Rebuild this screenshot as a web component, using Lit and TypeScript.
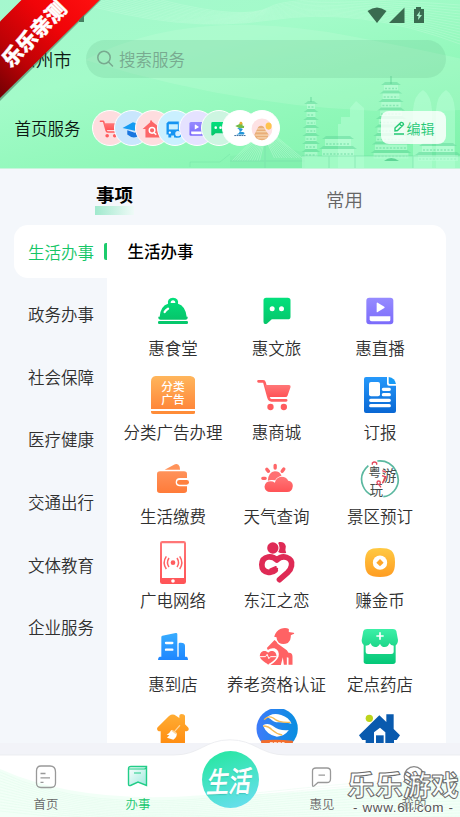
import { LitElement, html, css, svg, SVGTemplateResult } from "lit";
import { customElement } from "lit/decorators.js";
import { classMap } from "lit/directives/class-map.js";

interface Icon { box: string; art: SVGTemplateResult; }
interface Service extends Icon { name: string; }

const bell = svg`<path fill="url(#gGreen)" d="M158 119Q150 119 151 110H155Q158 77 180 71Q177 54 195 53Q213 54 210 71Q232 77 236 110H239Q240 119 232 119ZM188 69H202Q202 61 195 61Q188 61 188 69Z"/><rect x="150" y="123" width="90" height="9" rx="4" fill="#05c86c"/><path d="M170 96Q173 90 180 86" stroke="#fff" stroke-width="7" stroke-linecap="round" fill="none"/>`;
const chat = svg`<path fill="url(#gGreen)" d="M107 389H172Q180 389 180 397V446Q180 454 172 454H124L109 467Q99 471 99 461V397Q99 389 107 389Z"/><circle cx="125" cy="422" r="7.5" fill="#fff"/><circle cx="153" cy="422" r="7.5" fill="#fff"/>`;
const live = svg`<rect x="409" y="389" width="81" height="80" rx="9" fill="url(#gPurple)"/><path d="M440 406V431Q440 434 443 432L463 420Q465 418 463 416L443 404Q440 403 440 406Z" fill="#fff"/><path d="M419 445H481V456Q481 460 477 460H425Q419 460 419 454Z" fill="#fff"/>`;
const cart = svg`<path d="M450 304H464Q467 304 468 308L480 352Q482 361 489 361H533" fill="none" stroke="#ff6062" stroke-width="8" stroke-linecap="round" stroke-linejoin="round"/><path d="M469 315H542Q548 316 546 322L537 347Q536 351 531 351H481Z" fill="url(#gRed)"/><circle cx="486" cy="381" r="9.5" fill="#ff5b5e"/><circle cx="526" cy="381" r="9.5" fill="#ff5b5e"/>`;

const services: Service[] = [
  { name: "惠食堂", box: "129 27 132 132", art: bell },
  { name: "惠文旅", box: "73.5 363 132 132", art: chat },
  { name: "惠直播", box: "384 363 132 132", art: live },
  { name: "分类广告办理", box: "129 279 132 132", art: svg`<path d="M143 288H247Q262 290 262 304V387H129V304Q129 290 143 288Z" fill="url(#gOrange)"/><path d="M129 393H262V396Q262 402 256 402H135Q129 402 129 396Z" fill="#ff8c38"/><text x="195" y="333" class="ad">分类</text><text x="195" y="373" class="ad">广告</text>` },
  { name: "惠商城", box: "439.5 279 132 132", art: cart },
  { name: "订报", box: "234 39 132 132", art: svg`<path d="M258 51H321V71Q321 77 327 77H348V153Q348 159 342 159H258Q252 159 252 153V57Q252 51 258 51Z" fill="url(#gBlue)"/><path d="M326 51Q345 54 348 72H330Q326 72 326 68Z" fill="#189bf6"/><rect x="267" y="66" width="33" height="43" rx="6" fill="#fff"/><path d="M310 88H328M310 104H328M272 121H328M272 137H328" stroke="#fff" stroke-width="9.500" stroke-linecap="round"/>` },
  { name: "生活缴费", box: "129 21 132 132", art: svg`<path d="M170 59L201 43Q211 39 215 50L216 59Z" fill="#ff935a"/><path d="M156 64H228Q237 64 237 72V84H216Q203 84 203 97Q203 109 216 109H237V121Q237 129 228 129H156Q147 129 147 121V72Q147 64 156 64Z" fill="url(#gOrange2)"/><rect x="207" y="90" width="36" height="14" rx="7" fill="#ff813f"/>` },
  { name: "天气查询", box: "439.5 21 132 132", art: svg`<path d="M500 46V54M475 58L480 64M526 57L521 64M463 85H470" stroke="#ff6668" stroke-width="10" stroke-linecap="round"/><path d="M478 92Q480 66 499 64Q514 64 519 77Q505 80 500 91Q488 88 478 92Z" fill="#ff7072"/><path d="M486 126Q469 125 468 110Q470 94 487 94Q494 94 499 98Q503 81 519 80Q534 80 539 92Q553 94 553 108Q551 126 536 126Z" fill="url(#gRed)"/>` },
  { name: "景区预订", box: "234 291 132 132", art: svg`<path d="M265 317Q235 344 249 378Q257 397 274 405M292 303Q328 299 347 331Q365 365 342 393Q328 409 310 410" fill="none" stroke="#5bb8a0" stroke-width="5"/><text x="284" y="350" class="tour" font-size="37">粤</text><text x="327" y="363" class="tour" font-size="44">游</text><text x="289" y="406" class="tour" font-size="40">玩</text><path d="M277 314V309Q283 303 290 309V314M307 332L318 337M306 347L318 351M307 370L319 349" fill="none" stroke="#e4485c" stroke-width="4"/><circle cx="296" cy="368" r="5" fill="#fff" stroke="#e4485c" stroke-width="4"/><path d="M297 374L303 382" stroke="#e4485c" stroke-width="4"/>` },
  { name: "广电网络", box: "129 273 132 132", art: svg`<path fill-rule="evenodd" d="M163 273H227Q234 273 234 280V395Q234 402 227 402H163Q156 402 156 395V280Q156 273 163 273ZM162 280V384H228V280Z" fill="url(#gRed)"/><circle cx="195" cy="393" r="5.5" fill="#fff"/><circle cx="195" cy="338" r="7" fill="#ff5c5f"/><path d="M183 324Q174 338 183 351M207 324Q216 338 207 351M175 319Q162 338 175 357M215 319Q228 338 215 357" fill="none" stroke="#ff6264" stroke-width="4.500"/>` },
  { name: "东江之恋", box: "73.500 33 132 132", art: svg`<circle cx="127" cy="54" r="17" fill="#df2a55"/><path d="M146 36Q163 34 166 49Q163 60 167 69Q151 72 143 66Q151 53 143 39Z" fill="#df2a55"/><path d="M134 121Q126 129 114 127Q94 124 94 104Q95 84 113 81Q128 79 139 90Q152 77 168 82Q187 89 183 107Q181 118 172 127L147 149" fill="none" stroke="#df2a55" stroke-width="17" stroke-linecap="round" stroke-linejoin="round"/><path d="M119 118L136 111M126 122L140 116" stroke="#df2a55" stroke-width="6" stroke-linecap="round"/>` },
  { name: "赚金币", box: "384 33 132 132", art: svg`<path d="M450 54C482 54 495 62 495 97C495 132 483 141 450 141C416 141 405 132 405 97C405 62 417 54 450 54Z" fill="url(#gGold)"/><circle cx="450" cy="98" r="21.500" fill="#fff"/><path d="M450 87L461 98L450 109L439 98Z" fill="#ffa629"/>` },
  { name: "惠到店", box: "129 30 132 132", art: svg`<path d="M160 66Q160 63 163 62L203 54Q208 53 208 58V125H212V86Q212 83 216 83Q231 82 231 92V125H236Q240 126 240 135H150Q150 126 155 125H160Z" fill="url(#gSky)"/><path d="M174 84H193M174 104H193" stroke="#fff" stroke-width="7" stroke-linecap="round"/>` },
  { name: "养老资格认证", box: "73.500 285 132 132", art: svg`<path d="M131 320Q136 302 151 296Q166 291 175 297V306L189 308Q194 310 187 313L181 316Q182 330 172 339Q157 346 145 338Q138 332 138 322Z" fill="#ff6264"/><path d="M109 354L132 330Q138 334 142 341L169 361L174 368Q186 367 186 380V404H174V383L169 382V404H160L157 382L151 405H120Q138 393 144 380Q148 360 132 355Q120 353 112 360Z" fill="#ff6264"/><path d="M113 368C105 359 88 362 88 379C89 390 103 396 113 404C123 396 137 390 138 379C138 362 121 359 113 368Z" fill="#ff6264"/><path d="M88 380H105L110 373L115 386L120 380H138" fill="none" stroke="#fff" stroke-width="3"/>` },
  { name: "定点药店", box: "384 285 132 132", art: svg`<rect x="401" y="315" width="96" height="87" rx="8" fill="url(#gMint)"/><path d="M407 340H491V366Q491 372 484 372H414Q407 372 407 366Z" fill="#fff"/><path d="M411 297H489Q497 297 499 303L504 330Q504 346 492 347Q482 347 478 339Q475 351 464 351Q454 351 450 341Q445 351 435 351Q424 350 422 339Q418 347 408 347Q395 346 395 331L400 303Q402 297 411 297Z" fill="url(#gMintTop)"/><path d="M450 307V329M439 318H461" stroke="#fff" stroke-width="5"/>` },
  { name: "", box: "129 282 132 132", art: svg`<path d="M149 337L183 303Q194 295 204 302L214 309V302Q214 297 221 297Q229 297 231 302V328L240 337Q246 345 236 349H231V410H158V349H152Q144 344 149 337Z" fill="url(#gHouse)"/><path d="M215 332L200 349" stroke="#ffd59b" stroke-width="4" stroke-linecap="round"/><path d="M190 345L206 355Q208 366 196 374L177 368L184 361L176 359Q185 355 190 345Z" fill="#fff"/><path d="M192 346L205 356" stroke="#ffd59b" stroke-width="5"/>` },
  { name: "", box: "73.500 57 132 132", art: svg`<circle cx="140" cy="116" r="62" fill="url(#gBank)"/><path d="M101 89Q122 65 152 75Q175 82 183 101Q165 95 147 97Q130 98 119 86Q109 80 101 89Z" fill="#fff"/><path d="M101 89Q113 75 128 84Q144 99 180 97" fill="none" stroke="#f4ba54" stroke-width="4"/><path d="M97 106Q112 97 126 107Q148 124 175 120Q162 139 139 140Q110 137 97 106Z" fill="#fff"/><path d="M98 108Q114 108 125 120Q138 132 155 135" fill="none" stroke="#f4ba54" stroke-width="4"/><path d="M92 151Q140 147 187 152V180H92Z" fill="#f36d2c"/><path d="M118 158H162" stroke="#ffd9c4" stroke-width="4" stroke-dasharray="9 3"/>` },
  { name: "", box: "384 57 132 132", art: svg`<circle cx="418" cy="85" r="11" fill="#bdd41b"/><path d="M448 76L469 96V73H491V117L510 136L500 150H492V185H466V127L450 113L432 127V185H407V150H397L387 136Z" fill="#095aae"/><rect x="438" y="136" width="23" height="50" fill="#095aae"/>` },
];

const shortcuts: (Icon & { tint: string })[] = [
  { tint: "pink", box: "411 260 180 160", art: cart },
  { tint: "blue", box: "0 0 36 36", art: svg`<path d="M8 18L19 12L31 16L21 21Z" fill="#159bf2"/><path d="M13 20.500L21 23L27 20V25Q20 31 13 25Z" fill="#1976df"/>` },
  { tint: "pink", box: "0 0 36 36", art: svg`<path d="M17 11L27 19H25V28H10V19H7L15 12V10H17Z" fill="#fc6668"/><circle cx="17" cy="20.500" r="3" fill="none" stroke="#fff" stroke-width="1.500"/><path d="M19 23L21.500 25" stroke="#fff" stroke-width="1.500"/>` },
  { tint: "cyan", box: "0 0 36 36", art: svg`<path fill-rule="evenodd" d="M11 11H22V24H20V28H17V26H14V28H11V25H9V13ZM11.500 14V19.500H21V14Z" fill="#1594f2"/><circle cx="12.500" cy="23" r="1.200" fill="#fff"/><circle cx="21" cy="24" r="3.500" fill="#d5efff" stroke="#1594f2" stroke-width="1.500"/>` },
  { tint: "lilac", box: "354 325 198 198", art: live },
  { tint: "mint", box: "45 325 198 198", art: chat },
  { tint: "white", box: "0 0 36 36", art: svg`<path d="M17 14L20 12L21 16L25 15L22 18L17 18L13 16Z" fill="#72bc48"/><circle cx="19" cy="13" r="1.500" fill="#e6ad34"/><path d="M15 18Q25 18 18 22Q25 22 22 25H14Q21 22 15 18Z" fill="#2295d8"/><path d="M12 26H24" stroke="#31679a" stroke-dasharray="2 .5"/>` },
  { tint: "white", box: "0 0 36 36", art: svg`<circle cx="18" cy="19" r="11" fill="#fde2e4"/><ellipse cx="25" cy="16" rx="3.200" ry="3.800" fill="#ffc34e"/><path d="M14 17Q17 14 20 17L22 21L25 25Q24 31 18 31Q11 31 10 25L12 21Z" fill="#e9ae78"/><path d="M13 19H21M12 22H23M11 25.500H25M13 28.500H23" stroke="#fff0d7" stroke-width=".8"/>` },
];

const categories = ["生活办事", "政务办事", "社会保障", "医疗健康", "交通出行", "文体教育", "企业服务"];

const range = (n: number) => Array.from({ length: n }, (_, i) => i);

const gradients = ([
  ["gGreen", "#03e07c", "#06c56a"], ["gPurple", "#968bff", "#7b6bfb"], ["gRed", "#ff7778", "#ff5356"],
  ["gOrange", "#ffb65c", "#ff873a"], ["gOrange2", "#ff925a", "#ff7b39"], ["gBlue", "#2699fb", "#0967d3"],
  ["gGold", "#ffc942", "#ff9d22"], ["gSky", "#38adff", "#1e86ff"], ["gMint", "#36e39b", "#04c878"],
  ["gMintTop", "#3cf0a7", "#1ed78a"], ["gHouse", "#ffad34", "#ff8407"],
] as const).map(([id, a, b]) => svg`<linearGradient id=${id} x1="0" y1="0" x2="0" y2="1"><stop stop-color=${a}/><stop offset="1" stop-color=${b}/></linearGradient>`);

const defs = svg`<defs>${gradients}<linearGradient id="gBank"><stop stop-color="#3e7bfa"/><stop offset="1" stop-color="#078ee0"/></linearGradient></defs>`;

// Tiered tower: dark eaves over pale storeys, widening towards the base.
const pagoda = (cx: number, top: number, levels: number, w: number, step: number, grow: number) => range(levels).map((i) => {
  const y = top + i * step;
  const h = w + i * grow;
  return svg`<path d="M${cx - h - 2} ${y + 3}Q${cx - h} ${y + 2} ${cx - h + 2} ${y}H${cx + h - 2}Q${cx + h} ${y + 2} ${cx + h + 2} ${y + 3}Z" fill="#5ad396" opacity=".45"/><rect x=${cx - h + 1} y=${y + 3} width=${2 * h - 2} height=${step - 3} fill="#c8ffdf" opacity=".5"/><path d="M${cx - h + 2} ${y + step - 2}H${cx + h - 2}" stroke="#55ce92" stroke-width="1.500" stroke-dasharray="2 1.500" opacity=".45"/>`;
});

@customElement("app-root")
export class AppRoot extends LitElement {
  static styles = css`
    :host { display: flex; flex-direction: column; position: relative; width: 460px; height: 817px; overflow: hidden; background: #f4f7fb; font: 350 16.5px/24px "Noto Sans CJK SC", sans-serif; color: #303030; }
    * { box-sizing: border-box; }
    svg { display: block; }
    header { position: relative; height: 169px; flex: none; background: linear-gradient(165deg, #a5f7ce 0%, #a3fbc9 35%, #91f8ba 65%, #7df3aa 100%); border-bottom: 1px solid #c8f5dc; color: #0d1913; }
    .scene { position: absolute; inset: 0; }
    .status { position: relative; display: flex; justify-content: flex-end; height: 40px; padding: 7px 35px 0 0; }
    .search-row { position: relative; display: flex; height: 38px; padding: 0 14px 0 17.500px; }
    .city { width: 68.500px; font-size: 18px; line-height: 39px; }
    .search { flex: 1; display: flex; align-items: center; gap: 5px; padding: 0 0 1px 10px; border-radius: 19px; background: rgba(104, 185, 139, .22); color: #78aa90; }
    .shortcuts { position: relative; display: flex; align-items: center; margin-top: 31.500px; height: 36px; padding: 0 14px 0 14.500px; }
    .shortcuts .title { width: 77.500px; }
    .circle { width: 36px; height: 36px; flex: none; border-radius: 50%; border: 1px solid #fff; overflow: hidden; }
    .circle + .circle { margin-left: -14.300px; }
    .pink { background: #fedddf; } .blue { background: #c9e6fd; } .cyan { background: #caf0ff; }
    .lilac { background: #e5e2ff; } .mint { background: #cdf5e1; } .white { background: #fff; }
    .edit { margin-left: auto; width: 65px; height: 33px; display: flex; align-items: center; justify-content: center; gap: 2px; border-radius: 8px; background: rgba(255, 255, 255, .82); color: #25c975; font-size: 14px; }
    .ribbon { position: absolute; left: 0; top: 0; width: 104px; height: 104px; overflow: hidden; }
    .ribbon svg { position: absolute; inset: 0; }
    .ribbon-text { position: absolute; left: -11px; top: 18px; width: 88px; line-height: 30px; text-align: center; font-size: 20.500px; font-weight: 900; color: #fff; -webkit-text-stroke: .4px #fff; transform: rotate(-46deg); white-space: nowrap; }
    .tabs { display: grid; grid-template-columns: 229px 231px; height: 56px; flex: none; text-align: center; font-size: 18.500px; }
    .tab { padding-top: 18px; color: #666; }
    .tab.on { padding-top: 13px; font-weight: 700; color: #000; }
    .tab.on::after { content: ""; display: block; width: 38.500px; height: 9px; margin: 0 auto; background: linear-gradient(90deg, #a0e9cd, #effaf7); }
    main { flex: 1; min-height: 0; display: flex; padding: 0 14px; overflow: hidden; }
    .side { width: 93px; display: flex; flex-direction: column; gap: 9.670px; }
    .cat { height: 53px; display: flex; align-items: center; justify-content: space-between; padding: 0 0 0 14px; flex: none; }
    .cat.on { background: #fff; border-radius: 14px 0 0 14px; color: #16c667; }
    .cat.on::after { content: ""; width: 3.500px; height: 17px; border-radius: 2px 0 0 2px; background: #1ccb6c; }
    .panel { flex: 1; background: #fff; border-radius: 0 14px 0 0; overflow: hidden; }
    h2 { margin: 14px 0 0 20.500px; font-size: 16.500px; line-height: 24px; font-weight: 500; color: #000; }
    .grid { display: grid; grid-template-columns: repeat(3, 103.500px); justify-content: center; grid-auto-rows: 84px; margin-top: 26px; }
    .item { display: flex; flex-direction: column; align-items: center; gap: 3px; white-space: nowrap; }
    .ad { font-size: 35px; font-weight: 500; fill: #fff; text-anchor: middle; }
    .tour { font-weight: 400; fill: #454b49; text-anchor: middle; }
    nav { position: relative; flex: none; height: 74px; background: #f2f3f8; display: grid; grid-template-columns: repeat(5, 92px); font-size: 12.400px; line-height: 18px; color: #666; }
    .wave { position: absolute; left: 0; top: -4px; }
    .nav-item { position: relative; display: flex; flex-direction: column; align-items: center; padding-top: 21px; gap: 5px; }
    .nav-item.on { color: #18c76e; }
    .life { position: relative; width: 57px; height: 57px; margin: 7.500px auto 0; border-radius: 50%; background: linear-gradient(160deg, #2de6a9 15%, #66dfec 90%); display: flex; align-items: center; justify-content: center; color: #fff; font-size: 22px; font-weight: 400; -webkit-text-stroke: .6px #fff; }
    .life span { transform: skewX(-10deg) rotate(-2deg) scaleY(1.300); text-shadow: 0 1px 1px rgba(10, 130, 110, .3); }
    .mark { position: absolute; left: 346px; top: 767px; width: 114px; }
    .mark .big { font-size: 28px; font-weight: 700; fill: rgba(255, 255, 255, .75); stroke: #6b6b6b; stroke-width: 1px; stroke-linejoin: round; }
    .mark .url { font: 400 13.500px "Liberation Sans", sans-serif; fill: #555; stroke: #fff; stroke-width: 1px; paint-order: stroke; }
  `;

  private icon(i: Icon, size: number) {
    return html`<svg width=${size} height=${size} viewBox=${i.box}>${defs}${i.art}</svg>`;
  }

  private scene() {
    return html`<svg class="scene" width="460" height="168" viewBox="0 0 460 168">
      <path d="M85 60Q190 5 350 36T460 62V110Q280 120 85 60Z" fill="#d0ffe1" opacity=".2"/>
      ${range(14).map((i) => svg`<path d="M${70 + i * 7} 0Q${180 + i * 5} ${34 - i} 270 ${20 - i}T460 ${44 - i * 3}" fill="none" stroke="#d6ffe6" stroke-width=".5" opacity=".5"/>`)}
      <path d="M338 168V124H341V117H350V108L356 101L364 108V168ZM413 168V110Q414 95 423 90Q431 95 432 110V168ZM436 168V110Q437 95 446 90Q454 95 455 110V168Z" fill="#baffd8" opacity=".5"/>
      <path d="M230 156Q250 156 265 126Q280 150 305 152V168H230Z" fill="#75dfa6" opacity=".2"/>
      ${range(12).map((i) => svg`<path d="M265 ${127 + i}L${232 + i * 2.5} 161M265 ${127 + i}L${302 - i * 2.500} 158" stroke="#c8ffdf" stroke-width=".6" opacity=".7"/>`)}
      <path d="M265 125V168M230 161H305" stroke="#7ce2ad" stroke-width="1.500" opacity=".5"/>
      ${pagoda(311, 101, 7, 5, 8, 0.4)}
      ${pagoda(391, 82, 9, 8, 8.5, 1.3)}
      <path d="M391 76V84M311 97V102" stroke="#54c98e" opacity=".7"/>
      ${pagoda(338, 136, 2, 14, 10, 3)}
      ${pagoda(438, 143, 2, 17, 9, 4)}
      <path d="M302 156H460V168H302Z" fill="#b4ffd3" opacity=".6"/>
      <path d="M302 156H460M329 156V168M355 156V168M413 156V168" stroke="#61d298" opacity=".4"/>
      <path d="M384 161Q391 155 399 161Z" fill="#42c581" opacity=".7"/>
      <path d="M190 167V162H220L230 154" fill="none" stroke="#6ddaa1" opacity=".35"/>
    </svg>`;
  }

  render() {
    return html`
      <header>
        ${this.scene()}
        <div class="status"><svg width="58" height="17" viewBox="0 0 58 17" fill="#3a6b50"><path d="M.5 4Q10-3 19.500 4L10 16Z"/><path d="M22 16L37.500.500V16Z"/><path d="M47 2H49V0H54V2H57V16H47Z"/><path d="M53 4L49.500 9H51.500L51 13L55 8H52.500Z" fill="#a7f2c9"/></svg></div>
        <div class="search-row">
          <div class="city">惠州市</div>
          <div class="search"><svg width="18" height="18" viewBox="0 0 18 18" fill="none" stroke="#78a98f" stroke-width="1.500"><circle cx="8" cy="7.500" r="6.200"/><path d="M12.500 12L16.500 16" stroke-linecap="round"/></svg><span>搜索服务</span></div>
        </div>
        <div class="shortcuts">
          <span class="title">首页服务</span>
          ${shortcuts.map((s) => html`<div class=${"circle " + s.tint}>${this.icon(s, 34)}</div>`)}
          <div class="edit"><svg width="12" height="14" viewBox="0 0 12 14" fill="none" stroke="#25c975" stroke-width="1.400"><path d="M2 10V7L8 1.500Q10 1 10.500 3.500L4.500 9.500ZM6.500 3L9 5.500M1 13H11"/></svg>编辑</div>
        </div>
        <div class="ribbon">
          <svg width="104" height="104" viewBox="0 0 104 104"><defs><linearGradient id="rib" x1="1" y1="0" x2="0" y2="1"><stop stop-color="#ff1010"/><stop offset=".35" stop-color="#f00408"/><stop offset=".7" stop-color="#bd0206"/><stop offset="1" stop-color="#720003"/></linearGradient></defs><path d="M0 22V101L101 0H22Z" fill="#28593e" opacity=".45"/><path d="M0 21.500V98L99.500 0H21.500Z" fill="url(#rib)"/><path d="M79 20L84 15V22H79Z" fill="#457f60"/></svg>
          <div class="ribbon-text">乐乐亲测</div>
        </div>
      </header>
      <div class="tabs"><div class="tab on">事项</div><div class="tab">常用</div></div>
      <main>
        <div class="side">${categories.map((c, i) => html`<div class=${classMap({ cat: true, on: i === 0 })}>${c}</div>`)}</div>
        <section class="panel">
          <h2>生活办事</h2>
          <div class="grid">${services.map((s) => html`<div class="item">${this.icon(s, 44)}<span>${s.name}</span></div>`)}</div>
        </section>
      </main>
      <nav>
        <svg class="wave" width="460" height="78" viewBox="0 0 460 78">
          <path d="M-2 16H174C200 16 205 .800 230 .800S260 16 286 16H462V80H-2Z" fill="#fff" stroke="#e8eaee" stroke-width=".8"/>
          <path d="M0 30Q80 66 205 56Q290 57 460 37V78H0Z" fill="#edfff4" opacity=".75"/>
          ${range(14).map((i) => svg`<path d="M0 ${33 + i * 3}Q${85 + i * 3} ${74 + i} 230 ${57 + i * 2}T460 ${38 + i * 3}" fill="none" stroke="#d2f8e1" stroke-width=".5" opacity=".55"/>`)}
        </svg>
        <div class="nav-item"><svg width="22" height="26" viewBox="0 0 22 26" fill="none" stroke="#999" stroke-width="1.300"><path d="M6 2H15Q20.500 2 20.500 8V19Q20.500 23.500 16 23.500H6Q1.500 23.500 1.500 19V7Q1.500 2 6 2ZM5.500 9.500H10.500M5.500 13.800H15M5.500 18.300H8.500"/></svg><span>首页</span></div>
        <div class="nav-item on"><svg width="22" height="26" viewBox="0 0 22 26" fill="none"><defs><linearGradient id="book" x1="0" y1="0" x2="1" y2="1"><stop stop-color="#fff"/><stop offset="1" stop-color="#9de9dd"/></linearGradient></defs><path d="M1.500 5Q1.500 2.500 4 2.500H19.500V21.500L11 18L3.500 21.500Q1.500 22 1.500 20Z" fill="url(#book)" stroke="#22cd88" stroke-width="1.400"/><path d="M1.500 5H17Q19.500 5 19.500 2.500M7 9H14" stroke="#22cd88" stroke-width="1.200"/></svg><span>办事</span></div>
        <div class="life"><span>生活</span></div>
        <div class="nav-item"><svg width="22" height="26" viewBox="0 0 22 26" fill="none" stroke="#999" stroke-width="1.300"><path d="M5 4H16Q19.500 4 19.500 7.500V15Q19.500 18.500 16 18.500H7L3 22Q1.500 23 1.500 21V7Q1.500 4 5 4ZM7.500 11.200H14"/></svg><span>惠见</span></div>
        <div class="nav-item"><svg width="24" height="26" viewBox="0 0 24 26" fill="none" stroke="#888" stroke-width="1.300"><circle cx="12" cy="12.500" r="9.800"/><path d="M7.500 14.500Q12 19 16.500 14.500"/></svg><span>我的</span></div>
      </nav>
      <svg class="mark" width="114" height="50" viewBox="0 0 114 50"><text class="big" x="1" y="29" textLength="112">乐乐游戏</text><text class="url" x="7" y="45" textLength="100">- www.6ll.com -</text></svg>
    `;
  }
}
